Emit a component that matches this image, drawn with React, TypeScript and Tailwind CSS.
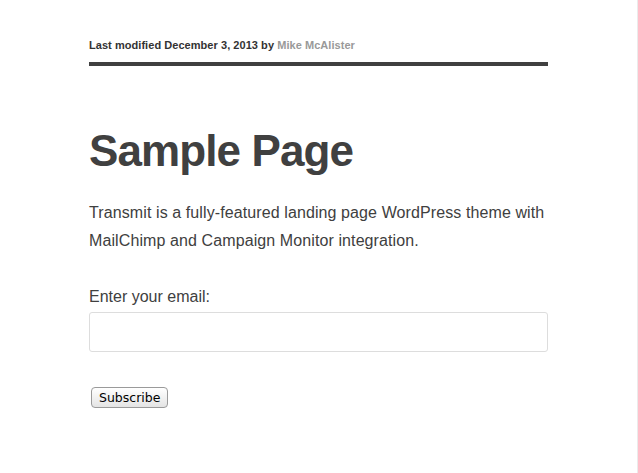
const App = () => {
  return (
    <div className="w-full min-h-screen bg-white flex font-['Liberation_Sans',Arial,sans-serif]">
      <div className="flex-1 pl-[89px] pr-[89px] pt-[38px]">
        <div className="w-[459px]">
          <p className="text-[11px] leading-[14px] font-bold text-[#333333] tracking-[0.05px]">
            Last modified December 3, 2013 by{" "}
            <a href="#" className="text-[#999999]">
              Mike McAlister
            </a>
          </p>
          <div className="mt-[10px] h-[4px] bg-[#404040]" />
          <h1 className="mt-[60px] text-[44px] leading-[50px] font-bold text-[#404040] tracking-[-0.9px]">
            Sample Page
          </h1>
          <p className="mt-[23px] text-[16px] leading-[28px] text-[#404040] tracking-[0.1px]">
            Transmit is a fully-featured landing page WordPress theme with
            MailChimp and Campaign Monitor integration.
          </p>
          <form className="mt-[32px]" onSubmit={(e) => e.preventDefault()}>
            <label className="block text-[16px] leading-[20px] text-[#404040]">
              Enter your email:
            </label>
            <input
              type="email"
              className="mt-[5px] block w-full h-[40px] rounded-[3px] border border-[#dddddd] bg-white px-3 focus:outline-none"
            />
            <button
              type="submit"
              className="mt-[35px] ml-[2px] h-[21px] px-[7px] rounded-[4px] border border-[#9a9a9a] bg-gradient-to-b from-white to-[#e4e4e4] text-[12.5px] leading-[18px] text-black font-['DejaVu_Sans',sans-serif]"
            >
              Subscribe
            </button>
          </form>
        </div>
      </div>
      <div className="w-px bg-[#ebebeb]" />
    </div>
  );
};

export default App;
